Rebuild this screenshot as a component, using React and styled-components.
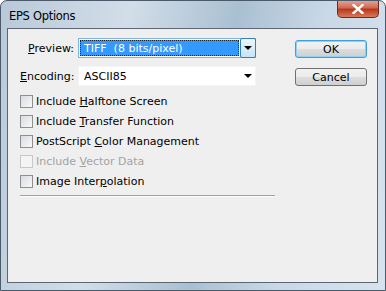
import React from 'react'
import styled, { createGlobalStyle, css } from 'styled-components'

const Global = createGlobalStyle`
  html, body { margin: 0; padding: 0; background: #fff; }
  body { font-family: Tahoma, "DejaVu Sans", sans-serif; }
`

const Window = styled.div`
  width: 386px;
  height: 291px;
  box-sizing: border-box;
  border: 1px solid #4b5a6a;
  border-radius: 7px 7px 0 0;
  background: linear-gradient(100deg, #b9c9d9 0%, #d2dde8 30%, #a9c0d2 55%, #c9d8e6 75%, #d8e2ee 100%);
  display: flex;
  flex-direction: column;
  overflow: hidden;
`

const TitleBar = styled.div`
  height: 27px;
  display: flex;
  align-items: flex-start;
  justify-content: space-between;
  padding-left: 8px;
`

const Title = styled.div`
  font-family: "DejaVu Sans", sans-serif;
  font-size: 11.5px;
  color: #000;
  margin-top: 8px;
  letter-spacing: -0.3px;
`

const CloseButton = styled.div`
  width: 42px;
  height: 18px;
  margin-right: 6px;
  margin-top: -1px;
  box-sizing: border-box;
  border: 1px solid #6b2a22;
  border-top: none;
  border-radius: 0 0 5px 5px;
  background: linear-gradient(#e8a89a 0%, #d06a52 45%, #b8381e 55%, #d87a5c 100%);
  display: flex;
  align-items: center;
  justify-content: center;
`

const Client = styled.div`
  flex: 1;
  margin: 0 7px 7px 6px;
  border: 1px solid #5c6670;
  background: #efefef;
  padding: 9px 0 0 12px;
  display: grid;
  grid-template-columns: 275px 72px;
  align-content: start;
`

const Form = styled.div`
  display: flex;
  flex-direction: column;
`

const FieldRow = styled.div`
  display: flex;
  align-items: center;
  height: 20px;
  margin-bottom: 8px;
`

const Label = styled.span`
  width: 54px;
  text-align: right;
  padding-right: 4px;
  font-size: 11px;
  color: #000;
`

const U = styled.span`
  text-decoration: underline;
`

const Combo = styled.div`
  width: 178px;
  height: 20px;
  box-sizing: border-box;
  display: flex;
  align-items: center;
  background: #fff;
  padding: 1px;
  border: 1px solid ${(p) => (p.focused ? '#7eb4ea' : '#f4f4f4')};
`

const ComboText = styled.div`
  flex: 1;
  height: 100%;
  box-sizing: border-box;
  display: flex;
  align-items: center;
  padding-left: 4px;
  font-size: 11px;
  white-space: pre;
  ${(p) => p.selected ? css`
    background: #3399ff;
    color: #fff;
    outline: 1px dotted #222;
    outline-offset: -1px;
  ` : css`
    color: #000;
  `}
`

const DropButton = styled.div`
  width: 16px;
  height: 18px;
  margin: -2px -2px -2px 1px;
  box-sizing: border-box;
  display: flex;
  align-items: center;
  justify-content: center;
  ${(p) => p.boxed && css`
    border: 1px solid #3c7fb1;
    border-radius: 2px;
    background: linear-gradient(#eaf6fd, #c6e4f6);
    height: 20px;
  `}
`

const Arrow = styled.div`
  width: 0;
  height: 0;
  border-left: 4px solid transparent;
  border-right: 4px solid transparent;
  border-top: 4px solid #000;
`

const CheckList = styled.div`
  display: flex;
  flex-direction: column;
  margin-top: -3px;
`

const CheckRow = styled.div`
  display: flex;
  align-items: center;
  height: 20px;
  font-size: 11px;
  color: ${(p) => (p.disabled ? '#a3a3a3' : '#000')};
`

const Box = styled.div`
  width: 13px;
  height: 13px;
  box-sizing: border-box;
  margin-right: 3px;
  border: 1px solid ${(p) => (p.disabled ? '#c8c8c8' : '#8f8f8f')};
  background: ${(p) => (p.disabled ? '#f4f4f4' : 'linear-gradient(135deg, #d8dde2, #f8f8f8)')};
`

const Separator = styled.div`
  height: 1px;
  width: 255px;
  background: #a0a0a0;
  border-bottom: 1px solid #fff;
  margin-top: 4px;
`

const Buttons = styled.div`
  display: flex;
  flex-direction: column;
  gap: 10px;
  padding-top: 2px;
`

const Button = styled.div`
  height: 18px;
  box-sizing: border-box;
  border-radius: 3px;
  border: 1px solid ${(p) => (p.primary ? '#3c9fe0' : '#707070')};
  box-shadow: ${(p) => (p.primary ? 'inset 0 0 0 1px #8fd0f5' : 'none')};
  background: linear-gradient(#f2f2f2 0%, #ebebeb 50%, #dddddd 51%, #cfcfcf 100%);
  display: flex;
  align-items: center;
  justify-content: center;
  font-size: 11px;
  color: #000;
`

const checks = [
  { pre: 'Include ', key: 'H', post: 'alftone Screen' },
  { pre: 'Include ', key: 'T', post: 'ransfer Function' },
  { pre: 'PostScript ', key: 'C', post: 'olor Management' },
  { pre: 'Include ', key: 'V', post: 'ector Data', disabled: true },
  { pre: 'Image Inter', key: 'p', post: 'olation' },
]

export default function App() {
  return (
    <>
      <Global />
      <Window>
        <TitleBar>
          <Title>EPS Options</Title>
          <CloseButton>
            <svg width="12" height="10" viewBox="0 0 12 10">
              <path d="M1.5 1 L10.5 9 M10.5 1 L1.5 9" stroke="#fff" strokeWidth="2.4" strokeLinecap="square" />
            </svg>
          </CloseButton>
        </TitleBar>
        <Client>
          <Form>
            <FieldRow>
              <Label><U>P</U>review:</Label>
              <Combo focused>
                <ComboText selected>{'TIFF  (8 bits/pixel)'}</ComboText>
                <DropButton boxed><Arrow /></DropButton>
              </Combo>
            </FieldRow>
            <FieldRow>
              <Label><U>E</U>ncoding:</Label>
              <Combo>
                <ComboText>ASCII85</ComboText>
                <DropButton><Arrow /></DropButton>
              </Combo>
            </FieldRow>
            <CheckList>
              {checks.map((c) => (
                <CheckRow key={c.post} disabled={c.disabled}>
                  <Box disabled={c.disabled} />
                  <span>{c.pre}<U>{c.key}</U>{c.post}</span>
                </CheckRow>
              ))}
            </CheckList>
            <Separator />
          </Form>
          <Buttons>
            <Button primary>OK</Button>
            <Button>Cancel</Button>
          </Buttons>
        </Client>
      </Window>
    </>
  )
}
